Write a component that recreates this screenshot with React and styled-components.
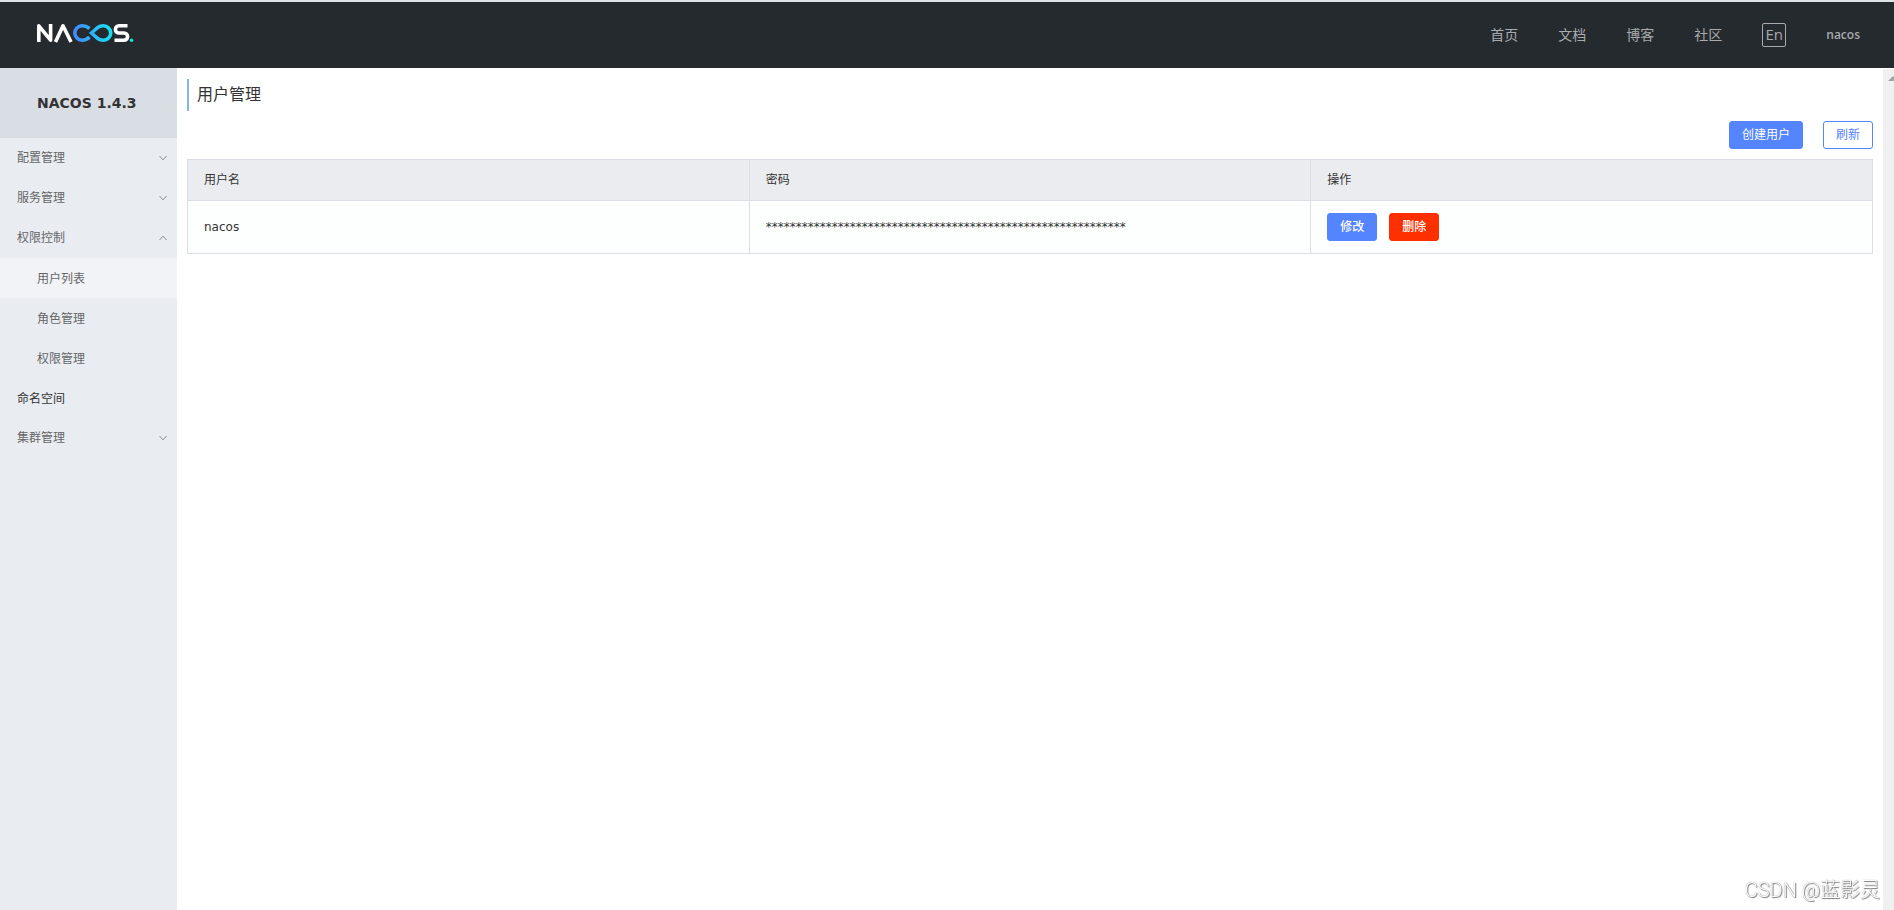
import React from 'react';
import styled, { createGlobalStyle } from 'styled-components';

const GlobalStyle = createGlobalStyle`
  * {
    box-sizing: border-box;
  }

  body {
    margin: 0;
    background: #fff;
    color: #333;
    font-family: 'DejaVu Sans', 'Noto Sans CJK SC', sans-serif;
    font-size: 12px;
  }

  button {
    font-family: inherit;
  }
`;

const navLinks = ['首页', '文档', '博客', '社区'];

const menu = [
  { name: '配置管理', children: [] },
  { name: '服务管理', children: [] },
  { name: '权限控制', open: true, children: ['用户列表', '角色管理', '权限管理'] },
  { name: '命名空间' },
  { name: '集群管理', children: [] },
];

const users = [{ username: 'nacos', password: '*'.repeat(60) }];

const Logo = () => (
  <svg width="98" height="20" viewBox="0 0 98 20" role="img" aria-label="NACOS">
    <defs>
      <linearGradient id="loop" x1="36" y1="0" x2="76" y2="0" gradientUnits="userSpaceOnUse">
        <stop offset="0" stopColor="#4583ff" />
        <stop offset="1" stopColor="#16e4f2" />
      </linearGradient>
    </defs>
    <g fill="none" stroke="#fff" strokeWidth="3.6" strokeLinejoin="round">
      <path d="M2.800 19V2.800L14.600 17.200V1" />
      <path d="M19.500 19L27 2.800L35 19" />
      <path d="M91.500 2.800H83a3.600 3.600 0 0 0 0 7.200H88a3.600 3.600 0 0 1 0 7.200H78.500" />
    </g>
    <g fill="none" stroke="url(#loop)" strokeWidth="3.600">
      <path d="M53.500 5.500C51 3.500 49 2.800 46 2.800a7.200 7.200 0 0 0 0 14.400C49 17.200 51 16.500 53.500 14" />
      <path d="M55.500 10L60.500 5.500C63 3.200 65 2.800 67.500 2.800a7.200 7.200 0 0 1 0 14.400C65 17.200 63 16.800 60.500 14.500Z" />
    </g>
    <circle cx="95.500" cy="17.300" r="1.700" fill="#16e4f2" />
  </svg>
);

const Arrow = ({ up }) => (
  <svg width="8" height="6" viewBox="0 0 8 6" fill="none" stroke="#888" aria-hidden="true">
    <path d={up ? 'M0.500 5L4 1.200L7.500 5' : 'M0.500 1L4 4.800L7.500 1'} />
  </svg>
);

const App = () => (
  <Page>
    <GlobalStyle />
    <Header>
      <LogoLink href="#">
        <Logo />
      </LogoLink>
      <Nav>
        {navLinks.map((link) => (
          <NavLink href="#" key={link}>{link}</NavLink>
        ))}
        <LangButton type="button">En</LangButton>
        <UserLink href="#">nacos</UserLink>
      </Nav>
    </Header>
    <Body>
      <Sidebar>
        <Version>NACOS 1.4.3</Version>
        <Menu>
          {menu.map((item) => (
            <li key={item.name}>
              {item.children ? (
                <MenuToggle type="button" aria-expanded={!!item.open}>
                  {item.name}
                  <Arrow up={item.open} />
                </MenuToggle>
              ) : (
                <MenuLink href="#">{item.name}</MenuLink>
              )}
              {item.open && (
                <Menu>
                  {item.children.map((child) => (
                    <li key={child}>
                      <SubLink href="#" $active={child === '用户列表'}>{child}</SubLink>
                    </li>
                  ))}
                </Menu>
              )}
            </li>
          ))}
        </Menu>
      </Sidebar>
      <Main>
        <Title>用户管理</Title>
        <Toolbar>
          <Button type="button" $color="#5584ff">创建用户</Button>
          <Button type="button" $color="#5584ff" $outline>刷新</Button>
        </Toolbar>
        <Table>
          <thead>
            <tr>
              <th>用户名</th>
              <th>密码</th>
              <th>操作</th>
            </tr>
          </thead>
          <tbody>
            {users.map((user) => (
              <tr key={user.username}>
                <td>{user.username}</td>
                <td>{user.password}</td>
                <td>
                  <Actions>
                    <Button type="button" $color="#5584ff" $strong>修改</Button>
                    <Button type="button" $color="#ff3000" $strong>删除</Button>
                  </Actions>
                </td>
              </tr>
            ))}
          </tbody>
        </Table>
      </Main>
      <ScrollTrack>
        <svg width="10" height="5" viewBox="0 0 10 5" aria-hidden="true">
          <path d="M0 5L5 0L10 5Z" fill="#a3a3a3" />
        </svg>
      </ScrollTrack>
    </Body>
    <Watermark>CSDN @蓝影灵</Watermark>
  </Page>
);

const Page = styled.div`
  display: flex;
  flex-direction: column;
  min-height: 100vh;
`;

const Header = styled.header`
  display: flex;
  align-items: center;
  justify-content: space-between;
  height: 68px;
  padding: 0 34px 0 36px;
  border-top: 2px solid #dfe3e6;
  background: #252a2f;
`;

const LogoLink = styled.a`
  display: flex;
  padding-bottom: 4px;
`;

const Nav = styled.nav`
  display: flex;
  align-items: center;
  gap: 40px;
`;

const NavLink = styled.a`
  color: #a8aaac;
  font-size: 14px;
  line-height: 20px;
  text-decoration: none;
`;

const LangButton = styled.button`
  width: 24px;
  height: 24px;
  padding: 0 0 2px;
  border: 1px solid #a8aaac;
  border-radius: 2px;
  background: none;
  color: #a8aaac;
  font-family: 'Open Sans', sans-serif;
  font-size: 15px;
  line-height: 20px;
`;

const UserLink = styled(NavLink)`
  font-family: 'Open Sans', sans-serif;
  font-size: 12px;
  font-weight: 600;
`;

const Body = styled.div`
  display: flex;
  flex: 1;
`;

const Sidebar = styled.aside`
  flex: 0 0 177px;
  background: #e9edf2;
`;

const Version = styled.h1`
  margin: 0;
  padding-left: 37px;
  background: #d9dee4;
  font-size: 14px;
  line-height: 70px;
`;

const Menu = styled.ul`
  margin: 0;
  padding: 0;
  list-style: none;
`;

const MenuToggle = styled.button`
  display: flex;
  align-items: center;
  justify-content: space-between;
  width: 100%;
  height: 40px;
  padding: 0 10px 0 17px;
  border: 0;
  background: none;
  color: #666;
  font-size: 12px;
  line-height: 42px;
`;

const MenuLink = styled.a`
  display: block;
  height: 40px;
  padding: 0 17px;
  color: #333;
  line-height: 42px;
  text-decoration: none;
`;

const SubLink = styled(MenuLink)`
  padding-left: 37px;
  background: ${({ $active }) => ($active ? '#f1f3f7' : 'none')};
  color: #666;
`;

const Main = styled.main`
  flex: 1;
  min-width: 0;
  padding: 11px 10px 10px;
`;

const Title = styled.h2`
  margin: 0 0 10px;
  padding-left: 8px;
  border-left: 2px solid #86b5e3;
  font-size: 16px;
  font-weight: 400;
  line-height: 32px;
`;

const Toolbar = styled.div`
  display: flex;
  justify-content: flex-end;
  gap: 20px;
  margin-bottom: 10px;
`;

const Button = styled.button`
  height: 28px;
  padding: 0 12px;
  border: 1px solid ${({ $color }) => $color};
  border-radius: 3px;
  background: ${({ $color, $outline }) => ($outline ? '#fff' : $color)};
  color: ${({ $color, $outline }) => ($outline ? $color : '#fff')};
  font-size: 12px;
  font-weight: ${({ $strong }) => ($strong ? 500 : 400)};
  line-height: 26px;
`;

const Actions = styled.div`
  display: flex;
  gap: 12px;
`;

const Table = styled.table`
  width: 100%;
  table-layout: fixed;
  border-collapse: collapse;

  th,
  td {
    padding: 12px 16px;
    border: 1px solid #dcdee3;
    text-align: left;
    font-weight: 400;
    line-height: 16px;
  }

  th {
    background: #ebecf0;
  }

  td {
    background: #fdfefe;
  }
`;

const ScrollTrack = styled.div`
  flex: 0 0 11px;
  padding: 7px 0 0 5px;
  margin-top: 1px;
  overflow: hidden;
  background: #f0f0f0;
  line-height: 0;
`;

const Watermark = styled.div`
  position: fixed;
  right: 14px;
  bottom: 6px;
  color: #fff;
  font-family: Roboto, 'Noto Sans CJK SC', sans-serif;
  font-size: 20px;
  font-weight: 300;
  line-height: 28px;
  text-shadow: 0 0 1px #777, 1px 1px 1px #777;
`;

export default App;
